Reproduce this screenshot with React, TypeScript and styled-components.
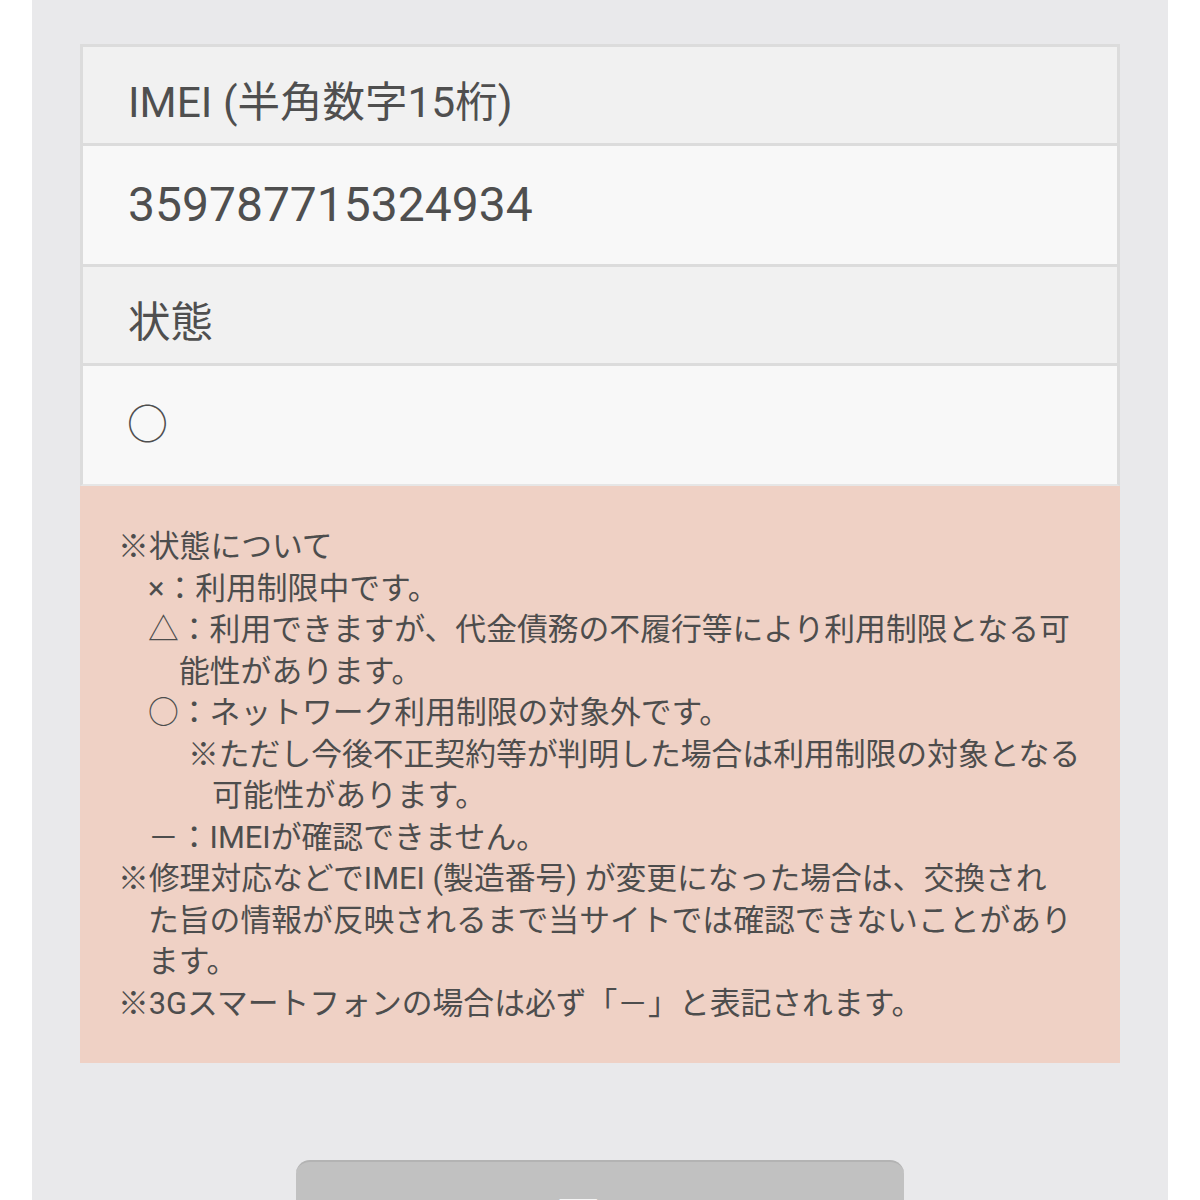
import React, { FC } from "react";
import styled, { createGlobalStyle } from "styled-components";

const GlobalStyle = createGlobalStyle`
  html, body {
    margin: 0;
    padding: 0;
    background: #ffffff;
    height: 1200px;
    overflow: hidden;
  }
  body {
    font-family: Roboto, "Noto Sans CJK JP", sans-serif;
  }
`;

const App: FC = () => {
  return (
    <>
      <GlobalStyle />
      <Panel>
        <Table>
          <HeaderCell>IMEI (半角数字15桁)</HeaderCell>
          <ValueCell>359787715324934</ValueCell>
          <HeaderCell>状態</HeaderCell>
          <ValueCell>
            <StatusMark>○</StatusMark>
          </ValueCell>
        </Table>
        <Note>
          {NoteLines.map(({ indent, text }, i) => (
            <NoteLine key={i} indent={indent}>
              {text}
            </NoteLine>
          ))}
        </Note>
        <ButtonWrapper>
          <BackButton>戻る</BackButton>
        </ButtonWrapper>
      </Panel>
    </>
  );
};

export default App;

const Panel = styled.main`
  margin: 0 32px;
  min-height: 1200px;
  background: #e9e9eb;
  padding: 44px 48px 0;
  box-sizing: border-box;
`;

const Table = styled.section`
  display: flex;
  flex-direction: column;
  border: 3px solid #dcdcdc;
  border-bottom: 2px solid #e6e6e6;
`;

const Cell = styled.div`
  display: flex;
  align-items: center;
  padding: 0 45px;
  color: #4f4f4f;
  white-space: nowrap;
  & + & {
    border-top: 3px solid #dcdcdc;
  }
`;

const HeaderCell = styled(Cell)`
  height: 80px;
  padding-top: 16px;
  background: #f1f1f1;
  font-size: 42.5px;
  line-height: 50px;
`;

const ValueCell = styled(Cell)`
  height: 118px;
  background: #f8f8f8;
  font-size: 48px;
  line-height: 60px;
`;

const StatusMark = styled.span`
  font-size: 41px;
  margin-left: -1px;
`;

const Note = styled.section`
  background: #efd1c5;
  padding: 40px 38px 38px;
  height: 577px;
  box-sizing: border-box;
  color: #4d4d4d;
  font-size: 30.8px;
  line-height: 41.5px;
`;

const NoteLine = styled.div<{ indent: number }>`
  padding-left: ${({ indent }) => indent}px;
  white-space: nowrap;
`;

const ButtonWrapper = styled.div`
  display: flex;
  justify-content: center;
  padding-top: 97px;
`;

const BackButton = styled.button`
  width: 608px;
  height: 110px;
  border: none;
  border-top: 2px solid #b3b3b3;
  border-radius: 14px;
  background: #c1c1c1;
  color: #ffffff;
  font-family: Roboto, "Noto Sans CJK JP", sans-serif;
  font-size: 44px;
  font-weight: bold;
  padding: 22px 0 0;
  display: flex;
  justify-content: center;
  align-items: flex-start;
`;

const NoteLines = [
  { indent: 0, text: "※状態について" },
  { indent: 30, text: "×：利用制限中です。" },
  { indent: 30, text: "△：利用できますが、代金債務の不履行等により利用制限となる可" },
  { indent: 61, text: "能性があります。" },
  { indent: 30, text: "○：ネットワーク利用制限の対象外です。" },
  { indent: 70, text: "※ただし今後不正契約等が判明した場合は利用制限の対象となる" },
  { indent: 94, text: "可能性があります。" },
  { indent: 30, text: "－：IMEIが確認できません。" },
  { indent: 0, text: "※修理対応などでIMEI (製造番号) が変更になった場合は、交換され" },
  { indent: 30, text: "た旨の情報が反映されるまで当サイトでは確認できないことがあり" },
  { indent: 30, text: "ます。" },
  { indent: 0, text: "※3Gスマートフォンの場合は必ず「－」と表記されます。" },
];
